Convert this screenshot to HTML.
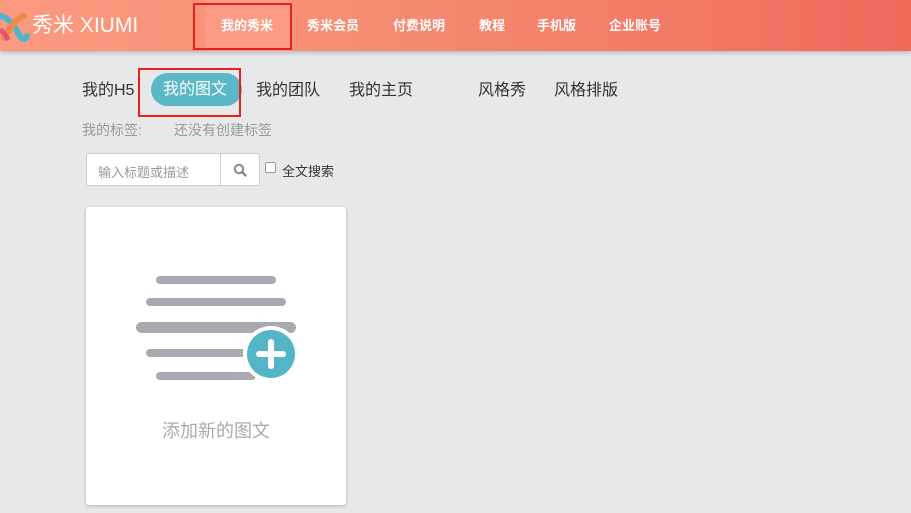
<!DOCTYPE html>
<html><head><meta charset="utf-8"><style>
*{margin:0;padding:0;box-sizing:border-box}
body{width:911px;height:513px;overflow:hidden;background:#e6e8ea;font-family:"Liberation Sans","Noto Sans CJK SC",sans-serif;position:relative}
.hdr{position:absolute;left:0;top:0;width:911px;height:51px;background:linear-gradient(90deg,#fb9a80,#f58d74 40%,#f06a5c);box-shadow:0 2px 4px rgba(0,0,0,.2)}
.logo{position:absolute;left:32px;top:13px;color:#fff;font-size:21px;line-height:26px}
.nav{position:absolute;top:0;height:51px;line-height:51px;color:#fff;font-size:13px;font-weight:bold}
.abs{position:absolute;white-space:nowrap}
.red{position:absolute;border:2px solid #e8201c}
.tab{font-size:16px;color:#333;top:81px;line-height:20px}
</style></head><body>
<div class="hdr">
<svg style="position:absolute;left:0;top:12px" width="30" height="30" viewBox="0 0 30 30"><path d="M0 4 C10 6 14 14 20 24 C22 28 26 28 27 24" stroke="#4fb6c9" stroke-width="6" fill="none" stroke-linecap="round"/><path d="M24 4 C16 6 10 16 4 26" stroke="#f08a4b" stroke-width="6" fill="none" stroke-linecap="round"/><path d="M0 18 C4 20 6 24 8 28" stroke="#e0557a" stroke-width="5" fill="none"/></svg>
<div class="logo">秀米 XIUMI</div>
<div style="position:absolute;left:205px;top:0;width:86px;height:51px;background:#fb9b84"></div>
<div class="nav" style="left:221px">我的秀米</div>
<div class="nav" style="left:307px">秀米会员</div>
<div class="nav" style="left:393px">付费说明</div>
<div class="nav" style="left:479px">教程</div>
<div class="nav" style="left:537px">手机版</div>
<div class="nav" style="left:609px">企业账号</div>
</div>
<div class="red" style="left:193px;top:3px;width:99px;height:47px"></div>
<div class="abs tab" style="left:82px">我的H5</div>
<div class="abs" style="left:151px;top:73px;width:91px;height:33px;border-radius:17px;background:#5ab8c9;color:#fff;font-size:16px;line-height:33px;padding-left:12px">我的图文</div>
<div class="red" style="left:138px;top:68px;width:103px;height:49px"></div>
<div class="abs tab" style="left:256px">我的团队</div>
<div class="abs tab" style="left:349px">我的主页</div>
<div class="abs tab" style="left:478px">风格秀</div>
<div class="abs tab" style="left:554px">风格排版</div>
<div class="abs" style="left:82px;top:120px;font-size:14px;color:#999">我的标签:</div>
<div class="abs" style="left:174px;top:120px;font-size:14px;color:#999">还没有创建标签</div>
<div class="abs" style="left:86px;top:153px;width:174px;height:33px;background:#fff;border:1px solid #ccc;border-radius:3px"></div>
<div class="abs" style="left:220px;top:153px;width:1px;height:33px;background:#ccc"></div>
<div class="abs" style="left:98px;top:162px;font-size:13px;color:#999">输入标题或描述</div>
<svg class="abs" style="left:233px;top:163px" width="14" height="14" viewBox="0 0 14 14"><circle cx="6" cy="6" r="4.2" stroke="#888" stroke-width="2" fill="none"/><path d="M9 9 L12.5 12.5" stroke="#888" stroke-width="2.4" stroke-linecap="round"/></svg>
<div class="abs" style="left:265px;top:162px;width:11px;height:11px;border:1px solid #999;background:#fff;border-radius:2px"></div>
<div class="abs" style="left:282px;top:161px;font-size:13px;color:#333">全文搜索</div>
<div class="abs" style="left:86px;top:207px;width:260px;height:298px;background:#fff;border-radius:3px;box-shadow:0 1px 3px rgba(0,0,0,.25)"></div>
<div class="abs" style="left:156px;top:276px;width:120px;height:8px;border-radius:4px;background:#a9aab1"></div>
<div class="abs" style="left:146px;top:298px;width:140px;height:8px;border-radius:4px;background:#a9aab1"></div>
<div class="abs" style="left:136px;top:322px;width:160px;height:11px;border-radius:6px;background:#a9aab1"></div>
<div class="abs" style="left:146px;top:349px;width:110px;height:8px;border-radius:4px;background:#a9aab1"></div>
<div class="abs" style="left:156px;top:372px;width:100px;height:8px;border-radius:4px;background:#a9aab1"></div>
<div class="abs" style="left:243px;top:326px;width:56px;height:56px;border-radius:50%;background:#fff"></div>
<div class="abs" style="left:247px;top:330px;width:48px;height:48px;border-radius:50%;background:#55b5c8"></div>
<div class="abs" style="left:256px;top:351px;width:30px;height:6px;border-radius:3px;background:#fff"></div>
<div class="abs" style="left:268px;top:339px;width:6px;height:30px;border-radius:3px;background:#fff"></div>
<div class="abs" style="left:162px;top:417px;font-size:18px;color:#aaa">添加新的图文</div>
</body></html>
